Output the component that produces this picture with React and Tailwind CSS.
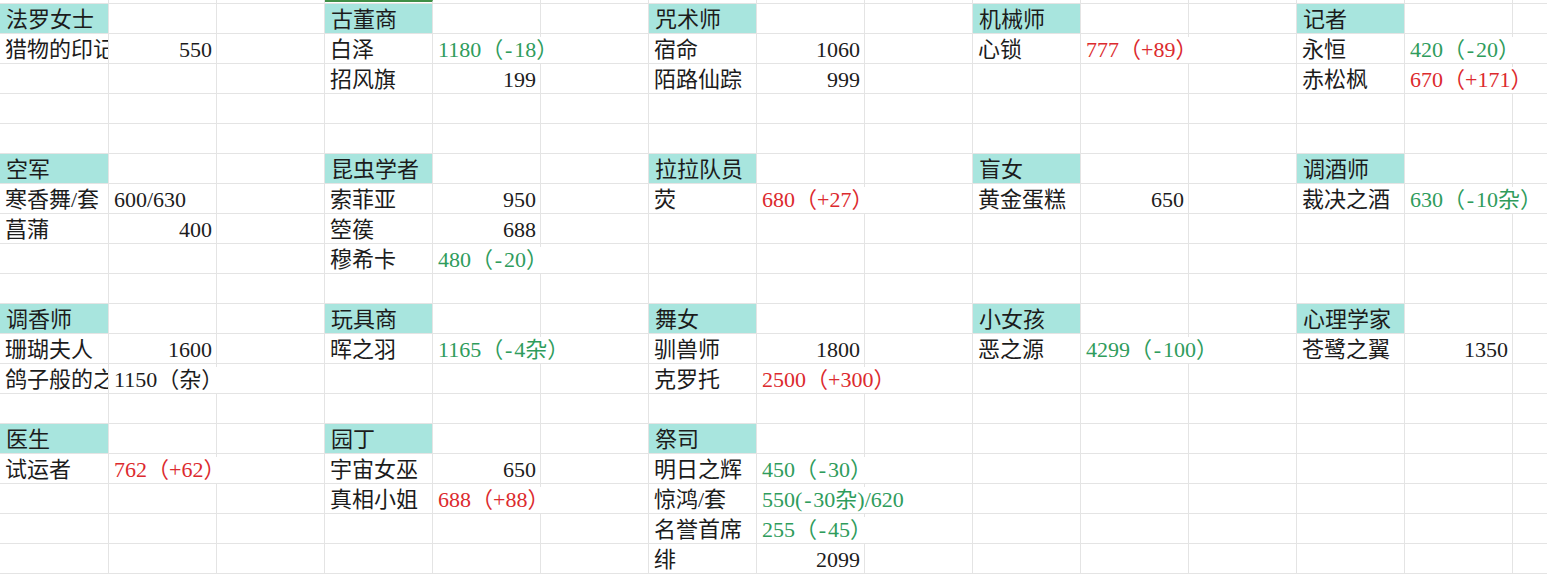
import React from 'react';

const G = 'text-[#2f9c5c]';
const R = 'text-[#dc2a2e]';

// each block: header on top, then [name, value, color?] rows
const blocks = [
  {
    row: 0,
    groups: [
      ['法罗女士', [['猎物的印记', 550]]],
      ['古董商', [['白泽', '1180（-18）', G], ['招风旗', 199]]],
      ['咒术师', [['宿命', 1060], ['陌路仙踪', 999]]],
      ['机械师', [['心锁', '777（+89）', R]]],
      ['记者', [['永恒', '420（-20）', G], ['赤松枫', '670（+171）', R]]],
    ],
  },
  {
    row: 5,
    groups: [
      ['空军', [['寒香舞/套', '600/630'], ['菖蒲', 400]]],
      ['昆虫学者', [['索菲亚', 950], ['箜篌', 688], ['穆希卡', '480（-20）', G]]],
      ['拉拉队员', [['荧', '680（+27）', R]]],
      ['盲女', [['黄金蛋糕', 650]]],
      ['调酒师', [['裁决之酒', '630（-10杂）', G]]],
    ],
  },
  {
    row: 10,
    groups: [
      ['调香师', [['珊瑚夫人', 1600], ['鸽子般的之羽', '1150（杂）']]],
      ['玩具商', [['晖之羽', '1165（-4杂）', G]]],
      ['舞女', [['驯兽师', 1800], ['克罗托', '2500（+300）', R]]],
      ['小女孩', [['恶之源', '4299（-100）', G]]],
      ['心理学家', [['苍鹭之翼', 1350]]],
    ],
  },
  {
    row: 14,
    groups: [
      ['医生', [['试运者', '762（+62）', R]]],
      ['园丁', [['宇宙女巫', 650], ['真相小姐', '688（+88）', R]]],
      ['祭司', [
        ['明日之辉', '450（-30）', G],
        ['惊鸿/套', '550(-30杂)/620', G],
        ['名誉首席', '255（-45）', G],
        ['绯', 2099],
      ]],
    ],
  },
];

const ROWS = 19;
const COLS = 15;

function buildGrid() {
  const grid = Array.from({ length: ROWS }, () => Array(COLS).fill(null));
  blocks.forEach(({ row, groups }) => {
    groups.forEach(([title, items], g) => {
      const c = g * 3;
      grid[row][c] = { kind: 'head', text: title };
      items.forEach(([name, val, color], i) => {
        grid[row + 1 + i][c] = { kind: 'text', text: name };
        grid[row + 1 + i][c + 1] =
          typeof val === 'number'
            ? { kind: 'num', text: String(val) }
            : { kind: 'text', text: val, color };
      });
    });
  });
  return grid;
}

// full-width brackets keep a whole em, hyphen gets a half em like the Song font
function renderText(text) {
  return text.split(/([（）-])/).map((part, i) => {
    if (part === '（') return <span key={i} className="inline-block w-[1em] text-right">（</span>;
    if (part === '）') return <span key={i} className="inline-block w-[1em] text-left">）</span>;
    if (part === '-') return <span key={i} className="inline-block w-[0.5em] text-center">-</span>;
    return <span key={i}>{part}</span>;
  });
}

const Cell = ({ cell, clip }) => {
  const base = 'h-[30px] border-r border-b border-[#e4e4e4] flex items-center whitespace-nowrap pt-[3px]';
  if (!cell) return <div className={base} />;
  if (cell.kind === 'head') {
    return (
      <div className={`${base} bg-[#a8e5de] pl-[6px] overflow-hidden text-[#1c1c1c]`}>
        {cell.text}
      </div>
    );
  }
  if (cell.kind === 'num') {
    return (
      <div className={`${base} justify-end pr-[4px] overflow-hidden text-[#1c1c1c]`}>
        {cell.text}
      </div>
    );
  }
  return (
    <div className={`${base} pl-[5px] ${clip ? 'overflow-hidden' : 'overflow-visible'}`}>
      <span
        className={`relative z-10 h-full flex items-center bg-white pr-[2px] ${cell.color || 'text-[#1c1c1c]'}`}
      >
        {renderText(cell.text)}
      </span>
    </div>
  );
};

export default function App() {
  const grid = buildGrid();
  return (
    <div
      className="w-[1547px] h-[574px] overflow-hidden bg-white text-[22px] leading-none"
      style={{ fontFamily: '"Liberation Serif", "Noto Sans CJK SC", serif' }}
    >
      <div className="grid grid-cols-[109px_repeat(14,108px)]">
        {Array.from({ length: COLS }).map((_, c) => (
          <div
            key={'top' + c}
            className={`h-[4px] border-r border-[#e4e4e4] ${c === 3 ? 'border-t-[2px] border-t-[#3f8f46] border-b border-b-[#e4e4e4]' : 'border-b border-b-[#e4e4e4]'}`}
          />
        ))}
        {grid.map((row, r) =>
          row.map((cell, c) => (
            <Cell
              key={r + '-' + c}
              cell={cell}
              clip={c < COLS - 1 && row[c + 1] !== null}
            />
          ))
        )}
      </div>
    </div>
  );
}
